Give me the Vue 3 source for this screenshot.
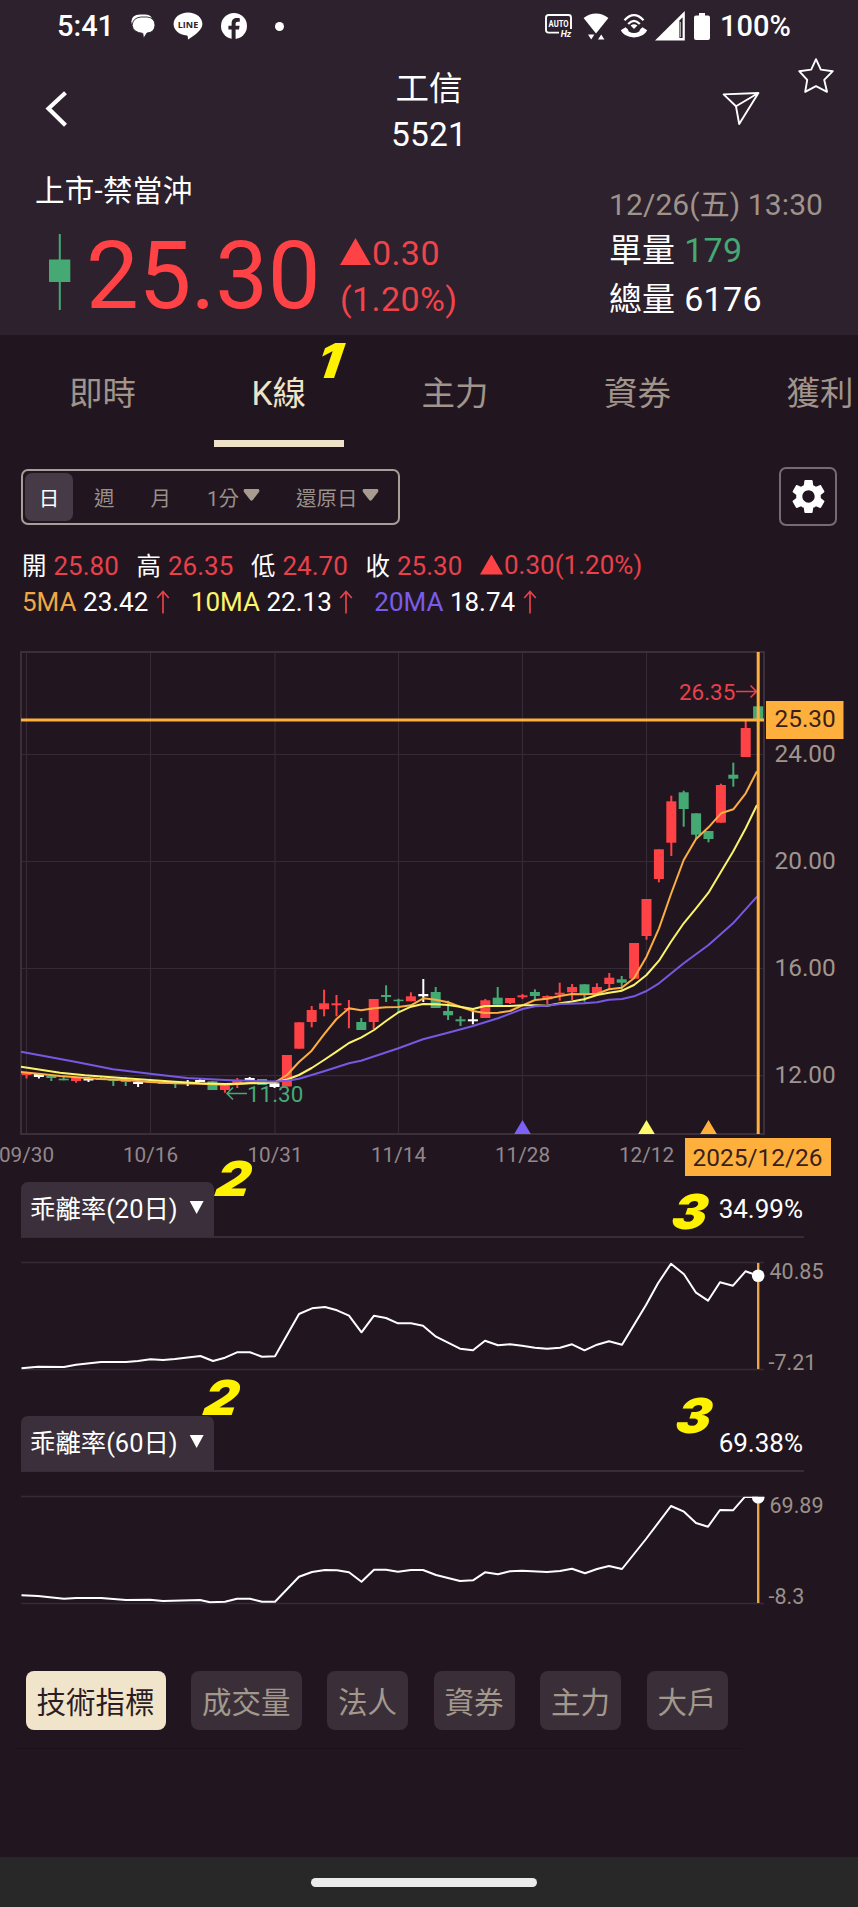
<script setup>
import { computed, ref } from 'vue'

/* ---------------------------------
   Quote
----------------------------------*/

const tabs = ['即時', 'K線', '主力', '資券', '獲利']
const activeTab = ref('K線')

const ohlc = [
  { label: '開', value: '25.80' },
  { label: '高', value: '26.35' },
  { label: '低', value: '24.70' },
  { label: '收', value: '25.30' }
]

const averages = [
  { label: '5MA', value: '23.42', color: 'orange' },
  { label: '10MA', value: '22.13', color: 'yellow' },
  { label: '20MA', value: '18.74', color: 'purple' }
]

/* ---------------------------------
   Candles: [high, body top, body bottom, low, colour]
   r = up, g = down, w = unchanged
----------------------------------*/

const rawCandles = [
  [432, 432, 435, 438.5, 'r'], [434, 434, 437, 438.5, 'w'], [435, 436, 438, 441, 'g'], [437, 438.7, 440.3, 440.3, 'g'],
  [437, 437.7, 441, 442.7, 'r'], [437, 438.5, 440.5, 442, 'w'], [437, 438, 440, 440, 'g'], [439, 439, 441, 446, 'g'],
  [437, 440, 442, 446, 'g'], [442, 442, 444, 447, 'w'], [441, 441, 443, 443, 'r'], [442, 442.5, 444, 444, 'g'],
  [442, 442.5, 444, 448, 'g'], [440, 442.5, 444, 446, 'w'], [439, 440, 442, 442, 'w'], [441, 441.3, 450, 450, 'g'],
  [445, 445.3, 450, 452.7, 'r'], [438, 440, 443, 448, 'r'], [437, 438, 440.3, 440.3, 'w'], [439, 439, 445, 445, 'g'],
  [443, 443.3, 447, 448, 'w'], [415, 415, 446.5, 446.5, 'r'], [382.3, 382.3, 408.7, 408.7, 'r'], [366, 370, 382, 387.3, 'r'],
  [349.7, 363.3, 369.3, 376.3, 'r'], [355, 363.3, 365.3, 376.3, 'r'], [360, 368, 369.7, 388.3, 'r'], [378, 382, 390, 390, 'g'],
  [359, 359, 382, 389, 'r'], [345.3, 355, 357, 362, 'g'], [358.7, 359.7, 361.2, 372.7, 'g'], [352.3, 356.3, 361.3, 361.3, 'r'],
  [339, 354, 356.3, 362, 'w'], [347, 352, 368, 368, 'g'], [360.7, 371, 375.3, 380, 'g'], [376.3, 379.3, 381.3, 386, 'g'],
  [369.3, 379.3, 381.3, 384.3, 'w'], [359, 360.3, 378, 378, 'r'], [347, 357.7, 364.7, 364.7, 'g'], [358, 358, 363, 364, 'r'],
  [354, 355.3, 357.3, 359, 'r'], [349.3, 352, 356, 359.3, 'g'], [355.3, 356, 359.3, 364, 'r'], [342.7, 352.7, 354.7, 360.7, 'r'],
  [344, 347, 352.3, 360, 'r'], [344.3, 344.3, 355, 361.7, 'g'], [343.3, 347, 353, 355, 'r'], [333, 337.7, 344, 349, 'r'],
  [336, 339.3, 342.7, 350, 'g'], [303, 303, 338.7, 338.7, 'r'], [259, 259, 296, 299.7, 'r'], [209.3, 209.3, 239, 242.3, 'r'],
  [155.7, 161.3, 202.7, 216, 'r'], [150.7, 152.3, 169, 186.7, 'g'], [173.3, 173.3, 194.7, 199, 'g'], [191, 191, 199, 202.3, 'g'],
  [143.7, 145, 182.7, 182.7, 'r'], [122.7, 134.7, 138.7, 146.7, 'g'], [81, 88, 117, 117, 'r'], [66.3, 66.3, 79, 79, 'g']
]

const STEP = 12.4
const START = 26.5

const candles = computed(() =>
  rawCandles.map(([high, top, bottom, low, tone], i) => ({
    x: START + i * STEP,
    high,
    top,
    bottom,
    low,
    tone
  }))
)

/* ---------------------------------
   Moving averages
----------------------------------*/

const ma5 = '21,432 26,432.5 60,436 100,439 125,440 150,442 175,443.2 200,443.7 213,444.3 225,444.7 237,444 250,443 262,443 274.5,442.5 287,435 299,422 311.7,410.7 324,394.3 336.5,379 349,368.3 361,370.3 374,368.3 386,367.3 398.5,367 411,365.3 423.3,358.3 435.7,359.7 448,362.3 460,366.7 473,371 485,373 498,372.7 510,371 522.5,365.3 535,360 547,358.7 560,356 572,354 584,354.3 597,353.7 609,349.3 621.7,347.7 634,338.3 646.5,316.7 659,288.3 671,254 683.7,220 696,199 708.5,187.3 721,173.3 733.3,169.3 745.7,153.3 757,131.3'
const ma10 = '21,426.7 60,432.7 85,435.3 125,438.3 150,440 175,441.7 200,443.3 225,444 237,443.7 250,443.3 262,443 274.5,442.3 287,439.5 299,435 311.7,428 324,420 336.5,411.7 349,403 361,397.7 374,390 386,381 398.5,372.3 411,366.7 423,364 436,364.3 448,365 460,366.7 473,369 485,366 498,366 510,366 522.5,365.3 535,365.3 547,365.7 560,363.3 572,361.5 584,359.3 597,355 609,352.7 622,350.7 634,345 646.5,335 659,320.7 671,301.7 683.7,283.3 696,268.3 708.5,252.7 721,231.7 733,211.7 745.7,188.3 757,165'
const ma20 = '21,411.7 75,421.7 113,429.3 150,433.7 187,438 225,440 262,441.3 275,441.5 287,440.7 299,438.7 311.7,435 324,431.3 349,423.3 361,420.7 398.5,408.3 423,399.3 448,392.7 473,386 498,378.3 522.5,369 535,366.3 547,365.7 560,364 584,363.3 597,362.3 609,359.7 622,359 634,356.3 646.5,351 659,343.3 683.7,323.3 708.5,305 733,283.3 757,256.7'

const priceTicks = [
  { label: '24.00', y: 114.5 },
  { label: '20.00', y: 221.5 },
  { label: '16.00', y: 328.5 },
  { label: '12.00', y: 435.7 }
]

const dateTicks = [
  { label: '09/30', x: 26.5 },
  { label: '10/16', x: 150.5 },
  { label: '10/31', x: 275 },
  { label: '11/14', x: 398.5 },
  { label: '11/28', x: 522.5 },
  { label: '12/12', x: 646.5 }
]

const markers = [
  { x: 522.5, tone: 'fill-purple' },
  { x: 646.5, tone: 'fill-yellow' },
  { x: 708.5, tone: 'fill-orange' }
]

/* ---------------------------------
   Bias indicators
----------------------------------*/

const indicators = [
  {
    id: 'bias20',
    name: '乖離率(20日)',
    value: '34.99%',
    max: '40.85',
    min: '-7.21',
    dot: 13.7,
    points: '21.5,106.3 38,104.7 64,105 76,102.7 101,100 126,100 138,99 150.5,97.3 163,98 175,97 200.5,94 213,99 225,95.7 237,90.3 250,90.3 262,94.7 275,94.3 299,52 312,46.3 325,45 337,48.3 349,53.7 361.5,70.3 374,53.7 386,56 398,61.3 411,61.3 423,63.7 436,74.7 448,80.7 460,86.7 473,88.3 485,78.7 498,83.3 510,82.3 522,83.7 535,85.7 547,86.7 560,85.7 572,82.3 584.5,88.3 597,82.7 609,79.3 622,82.7 646,43 658,21.3 671,1.7 684,12.3 696,30.7 708,38.7 720,20.3 733,23.7 745.5,9.3 758,13.7'
  },
  {
    id: 'bias60',
    name: '乖離率(60日)',
    value: '69.38%',
    max: '69.89',
    min: '-8.3',
    dot: 1.2,
    points: '21.5,99.3 38,100 64,102.7 76,102 101,102 126,104 150,103.7 163,105 200,104 210,106.3 225,105.7 237,102.7 250,102.7 262,105.7 275,105.7 299,80.7 312,76 325,74 337,74.3 349,76.3 361.5,85.7 374,73.7 386,73.7 398,75.7 411,74 423,74 436,79 448,82 460,85 473,84.3 485,76.3 498,78.3 510,75.3 522,74.7 547,76 560,75 572,72.7 585,77.3 597,73 609,70 622,73 646,43 671,10 684,15.7 696,27 708,30.7 720,14 733,14.3 745,0.7 758,1'
  }
]

const groups = ['技術指標', '成交量', '法人', '資券', '主力', '大戶']
const activeGroup = ref('技術指標')
</script>

<template>
  <div class="screen">

    <!-- STATUS BAR -->
    <div class="status">
      <span class="clock">5:41</span>
      <svg class="i-chat" width="25" height="25" viewBox="0 0 25 25">
        <path d="M2.4 12 Q-1.4 1.2 10 0.6 H15 Q20.5 0.8 22 4.5Z" fill="#fff" />
        <path d="M10.8 3 H17 Q25 3.8 25 11.3 Q24.5 18.6 17 19 L13.5 24.6 L12.8 19.4 Q3 18.3 2.2 11.5 Q2.6 3.8 10.8 3Z" fill="#fff" stroke="#2c212c" stroke-width="0.9" />
      </svg>
      <svg class="i-line" width="30" height="28" viewBox="0 0 30 28">
        <path d="M15 0.4 C23 0.4 29.4 5.5 29.4 12 C29.4 18 22 23 15.2 27.6 C14.5 27.4 15.6 24 13.8 23.6 C6 22.8 0.6 18 0.6 12 C0.6 5.5 7 0.4 15 0.4Z" fill="#fff" />
        <text x="15" y="15.6" text-anchor="middle" class="line-text">LINE</text>
      </svg>
      <svg class="i-fb" width="26" height="26" viewBox="0 0 26 26">
        <circle cx="13" cy="13" r="13" fill="#fff" />
        <path d="M10.6 26 V16.6 H7.4 V12.8 H10.6 V10.4 C10.6 6.6 12.8 5 16 5 C17.2 5 18.4 5.2 18.8 5.3 V8.7 H17 C15.2 8.7 14.6 9.6 14.6 10.8 V12.8 H18.6 L18 16.6 H14.6 V26Z" fill="#2c212c" />
      </svg>
      <span class="more-dot"></span>
      <div class="status-right">
        <svg width="28" height="24" viewBox="0 0 28 24">
          <path d="M14 18.6 H3.5 Q1 18.6 1 16 V3.5 Q1 1 3.5 1 H23.5 Q26 1 26 3.5 V15" fill="none" stroke="#fff" stroke-width="1.9" />
          <text x="13.6" y="12.8" text-anchor="middle" textLength="20" lengthAdjust="spacingAndGlyphs" class="auto-text">AUTO</text>
          <text x="21" y="23" text-anchor="middle" class="hz-text">Hz</text>
        </svg>
        <svg class="i-wifi" width="26" height="27" viewBox="0 0 26 27">
          <path d="M0.6 5 Q13 -3.8 25.4 5 L13 20.6Z" fill="#fff" />
          <path d="M5 21.6 H11.4 L8.2 26.6Z M15 26.6 H21.4 L18.2 21.6Z" fill="#fff" />
        </svg>
        <svg class="i-call" width="28" height="26" viewBox="0 0 28 26">
          <path d="M4.5 7.2 Q14 -3 23.5 7.2" fill="none" stroke="#fff" stroke-width="2.3" />
          <path d="M8.2 11 Q14 4.6 19.8 11" fill="none" stroke="#fff" stroke-width="2.2" />
          <path d="M10.6 12.6 Q14 10 17.4 12.6 L14 16Z" fill="#fff" />
          <path d="M0.8 17.2 L5.5 14.2 Q8.4 15.8 8.8 18.6 Q14 21.6 19.2 18.6 Q19.6 15.8 22.5 14.2 L27.2 17.2 Q24 24 14 24.4 Q4 24 0.8 17.2Z" fill="#fff" />
        </svg>
        <svg class="i-signal" width="30" height="30" viewBox="0 0 30 30">
          <path d="M0 29.6 L29.8 0 V29.6Z" fill="#fff" />
          <path d="M24.4 9.4 L27.6 6.2 V27 H24.4Z" fill="#2c212c" />
          <path d="M25.5 11 V26" stroke="#fff" stroke-width="0.6" />
        </svg>
        <svg class="i-battery" width="16" height="27" viewBox="0 0 16 27">
          <path d="M5 0 H11 V2.5 H14 Q16 2.5 16 4.5 V25 Q16 27 14 27 H2 Q0 27 0 25 V4.5 Q0 2.5 2 2.5 H5Z" fill="#fff" />
        </svg>
        <span class="battery">100%</span>
      </div>
    </div>

    <!-- HEADER -->
    <header>
      <div class="title-row">
        <svg class="back" width="26" height="38" viewBox="0 0 26 38">
          <path d="M22.5 2.8 L5.5 18.5 L22.5 35.2" fill="none" stroke="#fff" stroke-width="4.2" />
        </svg>
        <div class="title">
          <h1>工信</h1>
          <p>5521</p>
        </div>
        <svg class="send" width="39" height="36" viewBox="0 0 39 36">
          <path d="M1.6 3.4 L36.4 2 L17.2 33 L14 15.3Z M14 15.3 L36.4 2" fill="none" stroke="#fff" stroke-width="1.9" stroke-linejoin="round" />
        </svg>
        <svg class="star" width="38" height="38" viewBox="0 0 38 38">
          <path d="M19 2.2 L23.8 12.6 L35.8 14.2 L27.2 22.8 L30 34.8 L19 29.2 L8.2 34.8 L10.2 22.8 L2.2 14.2 L14.2 12.6Z" fill="none" stroke="#fff" stroke-width="1.9" stroke-linejoin="round" />
        </svg>
      </div>

      <div class="quote">
        <div class="quote-left">
          <p class="market">上市-禁當沖</p>
          <div class="price-row">
            <svg width="22" height="76" viewBox="0 0 22 76">
              <path d="M10.8 0 V76" stroke="#45a974" stroke-width="2" />
              <rect x="0" y="25.5" width="21.3" height="22.5" fill="#45a974" />
            </svg>
            <span class="price">25.30</span>
            <div class="change">
              <p><i class="up-big"></i>0.30</p>
              <p>(1.20%)</p>
            </div>
          </div>
        </div>
        <div class="quote-right">
          <p class="time">12/26(五) 13:30</p>
          <p class="volume">單量 <span class="green">179</span></p>
          <p class="volume last">總量 <span>6176</span></p>
        </div>
      </div>
    </header>

    <!-- TABS -->
    <nav class="tabs">
      <button
        v-for="tab in tabs"
        :key="tab"
        class="tab"
        :class="{ active: tab === activeTab }"
        @click="activeTab = tab"
      >{{ tab }}</button>
    </nav>

    <!-- PERIOD -->
    <div class="toolbar">
      <div class="segment">
        <span class="seg active">日</span>
        <span class="seg week">週</span>
        <span class="seg month">月</span>
        <span class="seg minute">1分<svg width="17" height="12" viewBox="0 0 17 12"><path d="M1.5 0 H15.5 Q17 1 16 3 L10 10.8 Q8.5 12.6 7 10.8 L1 3 Q0 1 1.5 0Z" /></svg></span>
        <span class="seg restore">還原日<svg width="17" height="12" viewBox="0 0 17 12"><path d="M1.5 0 H15.5 Q17 1 16 3 L10 10.8 Q8.5 12.6 7 10.8 L1 3 Q0 1 1.5 0Z" /></svg></span>
      </div>
      <button class="settings">
        <svg width="41" height="41" viewBox="0 0 24 24">
          <path fill="#fff" d="M19.14 12.94c.04-.3.06-.61.06-.94 0-.32-.02-.64-.07-.94l2.03-1.58c.18-.14.23-.41.12-.61l-1.92-3.32c-.12-.22-.37-.29-.59-.22l-2.39.96c-.5-.38-1.03-.7-1.62-.94l-.36-2.54c-.04-.24-.24-.41-.48-.41h-3.84c-.24 0-.43.17-.47.41l-.36 2.54c-.59.24-1.13.57-1.62.94l-2.39-.96c-.22-.08-.47 0-.59.22L2.74 8.87c-.12.21-.08.47.12.61l2.03 1.58c-.05.3-.09.63-.09.94s.02.64.07.94l-2.03 1.58c-.18.14-.23.41-.12.61l1.92 3.32c.12.22.37.29.59.22l2.39-.96c.5.38 1.03.7 1.62.94l.36 2.54c.05.24.24.41.48.41h3.84c.24 0 .44-.17.47-.41l.36-2.54c.59-.24 1.13-.56 1.62-.94l2.39.96c.22.08.47 0 .59-.22l1.92-3.32c.12-.22.07-.47-.12-.61l-2.01-1.58zM12 15.6c-1.98 0-3.6-1.62-3.6-3.6s1.62-3.6 3.6-3.6 3.6 1.62 3.6 3.6-1.62 3.6-3.6 3.6z" />
        </svg>
      </button>
    </div>

    <!-- OHLC -->
    <div class="ohlc">
      <span v-for="item in ohlc" :key="item.label" class="pair">
        {{ item.label }}<b>{{ item.value }}</b>
      </span>
      <span class="diff"><i class="up-small"></i>0.30(1.20%)</span>
    </div>
    <div class="averages">
      <span v-for="ma in averages" :key="ma.label" class="ma">
        <b :class="ma.color">{{ ma.label }}</b>{{ ma.value }}
        <svg width="14" height="24" viewBox="0 0 14 24">
          <path d="M7 23.5 V1.5 M1.2 8 L7 1.5 L12.8 8" fill="none" stroke="#e8414a" stroke-width="1.7" />
        </svg>
      </span>
    </div>

    <!-- K LINE -->
    <svg class="kline" width="858" height="540" viewBox="0 0 858 540">
      <g class="grid">
        <path v-for="t in priceTicks" :key="t.label" :d="`M21 ${t.y} H764`" />
        <path v-for="t in dateTicks" :key="t.label" :d="`M${t.x} 12 V494`" />
      </g>
      <rect class="frame" x="21" y="12" width="743" height="482" />

      <path v-for="m in markers" :key="m.x" :class="m.tone" :d="`M${m.x - 8.3} 494 L${m.x} 480 L${m.x + 8.3} 494Z`" />

      <g v-for="c in candles" :key="c.x" :class="['candle', c.tone]">
        <rect :x="c.x - 1" :y="c.high" width="2" :height="c.low - c.high" />
        <rect :x="c.x - 5" :y="c.top" width="10" :height="c.bottom - c.top" />
      </g>

      <polyline class="ma-line l5" :points="ma5" />
      <polyline class="ma-line l10" :points="ma10" />
      <polyline class="ma-line l20" :points="ma20" />

      <text x="247" y="462" class="extreme low">11.30</text>
      <path d="M247 453.5 H227 M233 447.5 L227 453.5 L233 459.5" class="arrow low-arrow" />
      <text x="679" y="60" class="extreme high">26.35</text>
      <path d="M736 51.5 H756.5 M750.5 45.5 L756.5 51.5 L750.5 57.5" class="arrow high-arrow" />

      <path d="M21 80 H764" class="cross" />
      <path d="M758.2 12 V494" class="cross" />

      <text v-for="t in priceTicks" :key="t.label" x="774.5" :y="t.y + 7.5" class="price-label">{{ t.label }}</text>
      <text v-for="t in dateTicks" :key="t.label" :x="t.x" y="522" class="date-label">{{ t.label }}</text>

      <rect x="766" y="61" width="77.5" height="38" class="fill-orange" />
      <text x="774.5" y="87" class="price-label dark">25.30</text>
      <rect x="685" y="498" width="146" height="38" class="fill-orange" />
      <text x="757.5" y="525.5" class="date-box">2025/12/26</text>
    </svg>

    <!-- INDICATORS -->
    <section v-for="item in indicators" :key="item.id" class="indicator">
      <div class="indicator-head">
        <button class="indicator-name">{{ item.name }}<i class="down"></i></button>
        <span class="indicator-value">{{ item.value }}</span>
      </div>
      <svg class="bias-chart" width="858" height="120" viewBox="0 0 858 120">
        <clipPath :id="item.id">
          <rect x="0" y="0.8" width="858" height="107" />
        </clipPath>
        <path d="M21 0.5 H764 M21 107.5 H764" class="bound" />
        <path d="M758.2 1 V107" class="cursor-line" />
        <g :clip-path="`url(#${item.id})`">
          <polyline class="bias" :points="item.points" />
          <circle cx="758.2" :cy="item.dot" r="6.3" fill="#fff" />
        </g>
        <text x="769.5" y="16.7" class="bias-label">{{ item.max }}</text>
        <text x="768.5" y="108.3" class="bias-label">{{ item.min }}</text>
      </svg>
    </section>

    <!-- GROUPS -->
    <div class="groups">
      <button
        v-for="g in groups"
        :key="g"
        class="group"
        :class="{ active: g === activeGroup }"
        @click="activeGroup = g"
      >{{ g }}</button>
    </div>

    <div class="home"><span></span></div>

    <!-- Step marks over the page -->
    <span class="mark m1">1</span>
    <span class="mark m2">2</span>
    <span class="mark m3">3</span>
    <span class="mark m4">2</span>
    <span class="mark m5">3</span>
  </div>
</template>

<style>
body {
  margin: 0;
  background: #211620;
}
</style>

<style scoped>
* {
  box-sizing: border-box;
}

.screen {
  position: relative;
  display: flex;
  flex-direction: column;
  width: 858px;
  height: 1907px;
  overflow: hidden;
  background: #211620;
  color: #fff;
  font-family: Roboto, "Noto Sans CJK TC", sans-serif;
}

p,
h1 {
  margin: 0;
  font-weight: 400;
}

button {
  padding: 0;
  border: none;
  background: none;
  color: inherit;
  font: inherit;
}

b {
  font-weight: 400;
}

svg {
  display: block;
  flex: none;
}

/* ---------- status ---------- */
.status {
  display: flex;
  flex: none;
  height: 52px;
  padding: 0 68px 0 57px;
  align-items: center;
  background: #2c212c;
}

.clock,
.battery {
  font-size: 29px;
  font-weight: 500;
  line-height: 54px;
}

.clock {
  width: 73px;
}

.battery {
  width: 70px;
}

.i-line {
  margin-left: 18px;
}

.i-fb {
  margin-left: 18px;
}

.line-text {
  font: 700 9px "Open Sans", sans-serif;
  fill: #2c212c;
}

.more-dot {
  width: 9px;
  height: 9px;
  margin-left: 28px;
  border-radius: 50%;
  background: #fff;
}

.status-right {
  display: flex;
  margin-left: auto;
  align-items: center;
}

.auto-text {
  font: 700 9.5px Roboto, sans-serif;
  fill: #fff;
}

.hz-text {
  font: italic 700 9px Roboto, sans-serif;
  fill: #fff;
}

.i-wifi {
  margin-left: 10px;
}

.i-call {
  margin-left: 11px;
}

.i-signal {
  margin-left: 7px;
}

.i-battery {
  margin: 0 10px 0 9px;
}

/* ---------- header ---------- */
header {
  flex: none;
  height: 283px;
  background: #2c212c;
}

.title-row {
  display: flex;
  height: 108px;
  padding-left: 43px;
}

.back {
  margin-top: 38px;
}

.title {
  width: 120px;
  margin-left: 300px;
  text-align: center;
}

.title h1 {
  padding-top: 12px;
  font-size: 33.5px;
  line-height: 50px;
}

.title p {
  font-size: 33.5px;
  line-height: 42px;
  letter-spacing: 0.2px;
}

.send {
  margin: 39px 0 0 233px;
}

.star {
  margin: 5px 0 0 36px;
}

.quote {
  display: flex;
  padding-left: 35px;
}

.quote-left {
  width: 574px;
}

.market {
  padding-top: 9px;
  font-size: 29.5px;
  line-height: 44px;
  letter-spacing: 0.3px;
}

.price-row {
  display: flex;
  padding: 21px 0 0 14px;
}

.price {
  width: 254px;
  margin-left: 15px;
  color: #ff4245;
  font-size: 94px;
  line-height: 85px;
  letter-spacing: -0.4px;
}

.change {
  color: #f0444b;
  font-size: 34px;
  line-height: 46px;
  letter-spacing: 0.4px;
  margin-top: -4px;
}

.change p {
  display: flex;
  align-items: center;
}

.up-big {
  width: 31px;
  height: 27px;
  margin: -3px 1px 0 0;
  background: #ff4245;
  clip-path: polygon(50% 0, 100% 100%, 0 100%);
}

.time {
  padding-top: 23px;
  color: #9f938b;
  font-size: 30px;
  line-height: 43px;
  letter-spacing: 0.1px;
}

.volume {
  font-size: 33px;
  line-height: 49px;
  white-space: pre;
}

.volume span {
  margin-left: 1px;
  font-size: 34px;
  letter-spacing: 0.3px;
}

.green {
  color: #45a974;
}

/* ---------- tabs ---------- */
.tabs {
  display: flex;
  flex: none;
  height: 112px;
  padding-left: 31px;
  gap: 39.5px;
}

.tab {
  flex: none;
  height: 112px;
  padding: 13px 38px 0;
  border-bottom: 7px solid transparent;
  color: #a0948b;
  font-size: 33.5px;
  line-height: 92px;
}

.tab.active {
  border-color: #eee3c9;
  color: #eee3c9;
}

/* ---------- toolbar ---------- */
.toolbar {
  display: flex;
  flex: none;
  height: 79px;
  padding: 20px 21px 0;
  justify-content: space-between;
}

.segment {
  display: flex;
  width: 379px;
  height: 56px;
  margin-top: 2px;
  padding: 2px;
  border: 2px solid #a89d98;
  border-radius: 7px;
  color: #9b9088;
  font-size: 20.5px;
  line-height: 44px;
}

.seg {
  display: flex;
  padding-top: 3px;
  align-items: center;
}

.seg.active {
  width: 48px;
  justify-content: center;
  border-radius: 7px;
  background: #453a45;
  color: #fff;
}

.week {
  margin-left: 21px;
}

.month {
  margin-left: 36px;
}

.minute {
  margin-left: 36px;
}

.restore {
  margin-left: 36px;
}

.seg svg {
  margin: -7px 0 0 4px;
  fill: #a89c90;
}

.settings {
  display: flex;
  width: 58px;
  height: 59px;
  align-items: center;
  justify-content: center;
  border: 2px solid #776a72;
  border-radius: 7px;
}

/* ---------- figures ---------- */
.ohlc,
.averages {
  display: flex;
  flex: none;
  padding-left: 22px;
  font-size: 26px;
}

.ohlc {
  height: 56px;
  padding-top: 21px;
  font-size: 24.5px;
  line-height: 38px;
}

.pair {
  width: 114.5px;
}

.pair b {
  margin-left: 7px;
  color: #e8414a;
  font-size: 26px;
}

.diff {
  display: flex;
  align-items: center;
  color: #e8414a;
  font-size: 26px;
}

.up-small {
  width: 23px;
  height: 20px;
  margin-right: 1px;
  background: #ff4245;
  clip-path: polygon(50% 0, 100% 100%, 0 100%);
}

.averages {
  height: 58px;
  gap: 21px;
  line-height: 40px;
}

.ma {
  display: flex;
  height: 40px;
  align-items: center;
}

.ma b {
  margin-right: 6.5px;
}

.ma svg {
  margin-left: 7.5px;
}

.orange {
  color: #f0a845;
}

.yellow {
  color: #fdf56a;
}

.purple {
  color: #7a5cec;
}

/* ---------- k line ---------- */
.kline text {
  font-family: Roboto, sans-serif;
}

.grid path {
  stroke: #352a35;
  stroke-width: 1.2;
}

.frame {
  fill: none;
  stroke: #3b303a;
  stroke-width: 2;
}

.fill-orange {
  fill: #ffb03c;
}

.fill-yellow {
  fill: #fffb6a;
}

.fill-purple {
  fill: #7d61f5;
}

.candle.r {
  fill: #ff4245;
}

.candle.g {
  fill: #45a974;
}

.candle.w {
  fill: #fff;
}

.ma-line {
  fill: none;
  stroke-width: 2;
  stroke-linejoin: round;
}

.l5 {
  stroke: #fdae40;
}

.l10 {
  stroke: #fbf46a;
}

.l20 {
  stroke: #7659e2;
}

.extreme {
  font-size: 22.4px;
}

.low {
  fill: #45a974;
}

.high {
  fill: #e8414a;
}

.arrow {
  fill: none;
  stroke-width: 1.6;
}

.low-arrow {
  stroke: #45a974;
}

.high-arrow {
  stroke: #e8414a;
}

.cross {
  stroke: #ffb03c;
  stroke-width: 3;
}

.price-label {
  fill: #a0948e;
  font-size: 24.4px;
}

.price-label.dark {
  fill: #3a1f1c;
}

.date-label {
  fill: #93888a;
  font-size: 20.7px;
  text-anchor: middle;
}

.date-box {
  fill: #3a1f1c;
  font-size: 24.4px;
  text-anchor: middle;
}

/* ---------- indicators ---------- */
.indicator {
  flex: none;
  height: 234px;
  padding-top: 2px;
}

.indicator-head {
  display: flex;
  width: 783px;
  height: 56px;
  margin: 0 0 24px 21px;
  justify-content: space-between;
  border-bottom: 2px solid #372c37;
}

.indicator-name {
  display: flex;
  width: 193px;
  height: 55px;
  padding: 0 0 5px 9px;
  align-items: center;
  border-radius: 7px 7px 0 0;
  background: #3a2f3a;
  font-size: 25.4px;
  white-space: nowrap;
}

.down {
  width: 14px;
  height: 13px;
  margin: 1px 0 0 12px;
  background: #fff;
  clip-path: polygon(0 0, 100% 0, 50% 100%);
}

.indicator-value {
  padding-right: 1px;
  font-size: 26px;
  line-height: 55px;
}

.bias-chart {
  overflow: visible;
}

.bound {
  stroke: #352a35;
  stroke-width: 1.5;
}

.cursor-line {
  stroke: #eba647;
  stroke-width: 2.4;
}

.bias {
  fill: none;
  stroke: #fff;
  stroke-width: 2;
  stroke-linejoin: round;
}

.bias-label {
  fill: #9b9089;
  font-family: Roboto, sans-serif;
  font-size: 21.5px;
}

/* ---------- groups ---------- */
.groups {
  display: flex;
  flex: none;
  width: 727px;
  height: 101px;
  margin-left: 15px;
  padding: 23px 0 0 10.5px;
  gap: 25.5px;
  border-bottom: 1px solid #1b111a;
}

.group {
  flex: none;
  height: 59px;
  padding: 5px 11px 0;
  border-radius: 8px;
  background: #3a2f38;
  color: #a3988c;
  font-size: 29.5px;
  line-height: 54px;
}

.group.active {
  background: #f0e5ca;
  color: #2b1d23;
}

/* ---------- home bar ---------- */
.home {
  display: flex;
  height: 50px;
  margin-top: auto;
  padding-top: 21px;
  flex: none;
  background: #282828;
}

.home span {
  width: 226px;
  height: 9px;
  margin-left: 311px;
  border-radius: 5px;
  background: #ebebeb;
}

/* ---------- marks ---------- */
.mark {
  position: absolute;
  color: #fff200;
  font: italic 900 48px/48px Inter, sans-serif;
  transform: skewX(-9deg) scaleX(1.1);
  transform-origin: left bottom;
}

.m1 {
  left: 314px;
  top: 337px;
}

.m2 {
  left: 213px;
  top: 1155px;
}

.m3 {
  left: 669px;
  top: 1188px;
}

.m4 {
  left: 201px;
  top: 1374px;
}

.m5 {
  left: 673px;
  top: 1392px;
}
</style>
